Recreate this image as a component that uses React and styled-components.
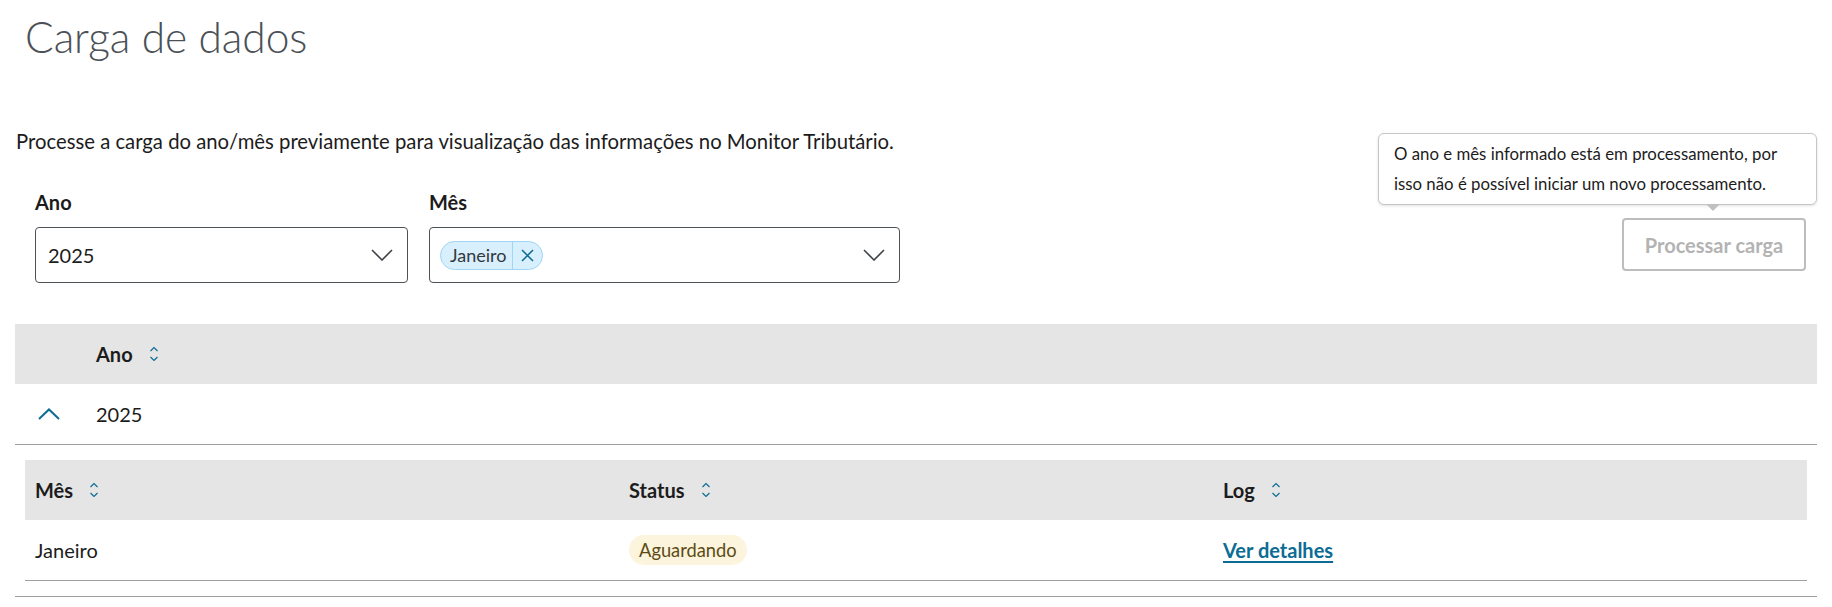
import React from "react";
import styled, { createGlobalStyle } from "styled-components";

const Global = createGlobalStyle`
  html, body { margin: 0; padding: 0; background: #fff; }
  body { font-family: Lato, "Noto Sans", sans-serif; color: #1c1c1c; }
  * { box-sizing: border-box; }
`;

const Page = styled.div`
  width: 1832px;
  height: 607px;
  overflow: hidden;
  position: relative;
`;

const Title = styled.h1`
  margin: 0;
  padding: 9px 0 0 25px;
  font-size: 42.5px;
  line-height: 56px;
  font-weight: 300;
  color: #4b5157;
  letter-spacing: -0.1px;
`;

const Intro = styled.p`
  margin: 64px 0 0 0;
  padding-left: 16px;
  font-size: 20.3px;
  line-height: 24px;
  color: #1c1c1c;
`;

const FormRow = styled.div`
  display: flex;
  align-items: flex-start;
  margin-top: 37px;
  padding: 0 26px 0 35px;
`;

const Fields = styled.div`
  display: flex;
  gap: 21px;
  flex: 1;
`;

const Field = styled.div`
  display: flex;
  flex-direction: column;
  gap: 13px;
  width: ${(p) => p.$w}px;
`;

const Label = styled.label`
  font-size: 20px;
  line-height: 24px;
  font-weight: 700;
  color: #1c1c1c;
`;

const SelectBox = styled.div`
  height: 56px;
  border: 1px solid #4d5257;
  border-radius: 4px;
  display: flex;
  align-items: center;
  justify-content: space-between;
  padding: 0 14px 0 ${(p) => p.$pl}px;
  font-size: 20px;
  color: #1c1c1c;
`;

const Chip = styled.span`
  display: inline-flex;
  align-items: stretch;
  height: 29px;
  border: 1px solid #9fd5f5;
  background: #d8effd;
  border-radius: 15px;
  font-size: 18px;
  color: #33393d;
  overflow: hidden;
`;

const ChipText = styled.span`
  display: flex;
  align-items: center;
  padding: 0 6px 0 9px;
  border-right: 1px solid #9fd5f5;
`;

const ChipClose = styled.span`
  display: flex;
  align-items: center;
  justify-content: center;
  width: 29px;
`;

const ButtonWrap = styled.div`
  position: relative;
  margin-top: 28px;
`;

const Button = styled.button`
  width: 184px;
  height: 53px;
  border: 2px solid #bdbdbd;
  border-radius: 4px;
  background: #fff;
  color: #b3b3b3;
  font-family: Lato, "Noto Sans", sans-serif;
  font-size: 20px;
  font-weight: 700;
  cursor: not-allowed;
`;

const Tooltip = styled.div`
  position: absolute;
  right: -11px;
  bottom: calc(100% + 13px);
  width: 439px;
  height: 72px;
  background: #fff;
  border: 1px solid #c6c6c6;
  border-radius: 6px;
  box-shadow: 0 1px 3px rgba(0, 0, 0, 0.12);
  padding: 5px 20px 5px 15px;
  font-size: 16.8px;
  line-height: 30px;
  color: #1c1c1c;
  &::after {
    content: "";
    position: absolute;
    bottom: -7px;
    right: 96px;
    border-left: 7px solid transparent;
    border-right: 7px solid transparent;
    border-top: 7px solid #c0c0c0;
  }
`;

const Table = styled.div`
  margin: 41px 15px 0 15px;
`;

const HeaderRow = styled.div`
  display: ${(p) => (p.$grid ? "grid" : "flex")};
  grid-template-columns: repeat(3, 1fr);
  align-items: center;
  height: 60px;
  background: #e5e5e5;
  padding-left: ${(p) => p.$pl}px;
`;

const HeadCell = styled.div`
  display: flex;
  align-items: center;
  gap: 16px;
  font-size: 20px;
  font-weight: 700;
  color: #1c1c1c;
  padding-left: ${(p) => p.$pl || 0}px;
`;

const YearRow = styled.div`
  display: flex;
  align-items: center;
  height: 61px;
  border-bottom: 1px solid #a0a0a0;
  font-size: 20px;
`;

const Expander = styled.span`
  width: 81px;
  display: flex;
  justify-content: flex-start;
  padding-left: 23px;
`;

const Detail = styled.div`
  padding: 15px 10px 15px 10px;
  border-bottom: 1px solid #a0a0a0;
`;

const BodyRow = styled.div`
  display: grid;
  grid-template-columns: repeat(3, 1fr);
  align-items: center;
  height: 61px;
  border-bottom: 1px solid #a0a0a0;
`;

const Cell = styled.div`
  padding-left: 10px;
  font-size: 20px;
  color: #1c1c1c;
`;

const Badge = styled.span`
  display: inline-flex;
  align-items: center;
  height: 30px;
  padding: 0 10px;
  border-radius: 15px;
  background: #fcf4dd;
  color: #5c4a14;
  font-size: 18.3px;
`;

const Link = styled.a`
  color: #0c6c94;
  font-weight: 700;
  text-decoration: underline;
  text-decoration-thickness: 2px;
  text-underline-offset: 3px;
  cursor: pointer;
`;

const SortIcon = () => (
  <svg width="10" height="18" viewBox="0 0 10 18" fill="none" stroke="#0c6c94" strokeWidth="1.2">
    <path d="M1.5 6 L5 2.5 L8.5 6" />
    <path d="M1.5 12 L5 15.5 L8.5 12" />
  </svg>
);

const ChevronDown = () => (
  <svg width="22" height="12" viewBox="0 0 22 12" fill="none" stroke="#3f4448" strokeWidth="1.6">
    <path d="M1 1 L11 11 L21 1" />
  </svg>
);

const ChevronUp = () => (
  <svg width="22" height="12" viewBox="0 0 22 12" fill="none" stroke="#0c6c94" strokeWidth="2">
    <path d="M1 11 L11 1.5 L21 11" />
  </svg>
);

const CloseIcon = () => (
  <svg width="13" height="13" viewBox="0 0 13 13" fill="none" stroke="#0c6c94" strokeWidth="1.5">
    <path d="M1 1 L12 12 M12 1 L1 12" />
  </svg>
);

export default function App() {
  return (
    <Page>
      <Global />
      <Title>Carga de dados</Title>
      <Intro>
        Processe a carga do ano/mês previamente para visualização das informações no Monitor Tributário.
      </Intro>
      <FormRow>
        <Fields>
          <Field $w={373}>
            <Label>Ano</Label>
            <SelectBox $pl={12}>
              <span>2025</span>
              <ChevronDown />
            </SelectBox>
          </Field>
          <Field $w={471}>
            <Label>Mês</Label>
            <SelectBox $pl={10}>
              <Chip>
                <ChipText>Janeiro</ChipText>
                <ChipClose>
                  <CloseIcon />
                </ChipClose>
              </Chip>
              <ChevronDown />
            </SelectBox>
          </Field>
        </Fields>
        <ButtonWrap>
          <Tooltip>
            O ano e mês informado está em processamento, por isso não é possível iniciar um novo processamento.
          </Tooltip>
          <Button disabled>Processar carga</Button>
        </ButtonWrap>
      </FormRow>
      <Table>
        <HeaderRow $pl={81}>
          <HeadCell>
            Ano <SortIcon />
          </HeadCell>
        </HeaderRow>
        <YearRow>
          <Expander>
            <ChevronUp />
          </Expander>
          <span>2025</span>
        </YearRow>
        <Detail>
          <HeaderRow $grid $pl={0}>
            <HeadCell $pl={10}>
              Mês <SortIcon />
            </HeadCell>
            <HeadCell $pl={10}>
              Status <SortIcon />
            </HeadCell>
            <HeadCell $pl={10}>
              Log <SortIcon />
            </HeadCell>
          </HeaderRow>
          <BodyRow>
            <Cell>Janeiro</Cell>
            <Cell>
              <Badge>Aguardando</Badge>
            </Cell>
            <Cell>
              <Link>Ver detalhes</Link>
            </Cell>
          </BodyRow>
        </Detail>
      </Table>
    </Page>
  );
}
